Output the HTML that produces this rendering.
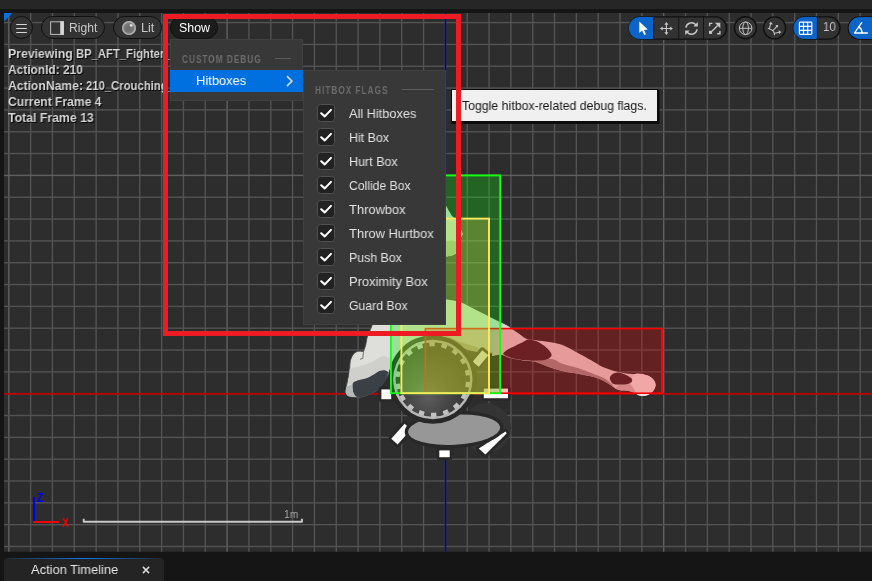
<!DOCTYPE html>
<html><head><meta charset="utf-8">
<style>
html,body{margin:0;padding:0;}
body{width:872px;height:581px;overflow:hidden;background:#151515;font-family:"Liberation Sans",sans-serif;position:relative;}
.abs{position:absolute;}
span{will-change:transform;}
#topbar{left:0;top:0;width:872px;height:9px;background:#262626;}
#vp{left:0;top:0;width:872px;height:581px;}
.pill{position:absolute;box-sizing:border-box;height:23.4px;top:16.1px;border:1.4px solid #101010;border-radius:12px;background:#333333;}
.info{color:#d6d6d6;text-shadow:1px 1px 0 #000;}
.menu{position:absolute;background:#383838;box-sizing:border-box;border:1px solid #404040;}
.cb{position:absolute;width:17.6px;height:17.6px;box-sizing:border-box;border:1px solid #505050;border-radius:3.5px;background:#222222;}
#tip{left:450.5px;top:89.3px;width:207px;height:33.2px;box-sizing:border-box;background:#f0f0f0;border:1px solid #0c0c0c;box-shadow:1px 1.5px 0 0.5px #0c0c0c;}
#tab{left:4px;top:558px;width:160px;height:23px;background:#242424;border-radius:4px 4px 0 0;overflow:hidden;}
</style></head><body>
<div class="abs" id="topbar"></div>
<svg class="abs" id="vp" width="872" height="581" viewBox="0 0 872 581">
<rect x="4" y="13" width="868" height="538.7" fill="#2d2d2d"/>
<rect x="8.10" y="13" width="1.4" height="538.7" fill="#606060"/>
<rect x="29.93" y="13" width="1.4" height="538.7" fill="#535353"/>
<rect x="51.76" y="13" width="1.4" height="538.7" fill="#535353"/>
<rect x="73.59" y="13" width="1.4" height="538.7" fill="#535353"/>
<rect x="95.42" y="13" width="1.4" height="538.7" fill="#535353"/>
<rect x="117.25" y="13" width="1.4" height="538.7" fill="#535353"/>
<rect x="139.08" y="13" width="1.4" height="538.7" fill="#535353"/>
<rect x="160.91" y="13" width="1.4" height="538.7" fill="#535353"/>
<rect x="182.74" y="13" width="1.4" height="538.7" fill="#535353"/>
<rect x="204.57" y="13" width="1.4" height="538.7" fill="#535353"/>
<rect x="226.40" y="13" width="1.4" height="538.7" fill="#606060"/>
<rect x="248.23" y="13" width="1.4" height="538.7" fill="#535353"/>
<rect x="270.06" y="13" width="1.4" height="538.7" fill="#535353"/>
<rect x="291.89" y="13" width="1.4" height="538.7" fill="#535353"/>
<rect x="313.72" y="13" width="1.4" height="538.7" fill="#535353"/>
<rect x="335.55" y="13" width="1.4" height="538.7" fill="#535353"/>
<rect x="357.38" y="13" width="1.4" height="538.7" fill="#535353"/>
<rect x="379.21" y="13" width="1.4" height="538.7" fill="#535353"/>
<rect x="401.04" y="13" width="1.4" height="538.7" fill="#535353"/>
<rect x="422.87" y="13" width="1.4" height="538.7" fill="#535353"/>
<rect x="444.70" y="13" width="1.4" height="538.7" fill="#606060"/>
<rect x="466.53" y="13" width="1.4" height="538.7" fill="#535353"/>
<rect x="488.36" y="13" width="1.4" height="538.7" fill="#535353"/>
<rect x="510.19" y="13" width="1.4" height="538.7" fill="#535353"/>
<rect x="532.02" y="13" width="1.4" height="538.7" fill="#535353"/>
<rect x="553.85" y="13" width="1.4" height="538.7" fill="#535353"/>
<rect x="575.68" y="13" width="1.4" height="538.7" fill="#535353"/>
<rect x="597.51" y="13" width="1.4" height="538.7" fill="#535353"/>
<rect x="619.34" y="13" width="1.4" height="538.7" fill="#535353"/>
<rect x="641.17" y="13" width="1.4" height="538.7" fill="#535353"/>
<rect x="663.00" y="13" width="1.4" height="538.7" fill="#606060"/>
<rect x="684.83" y="13" width="1.4" height="538.7" fill="#535353"/>
<rect x="706.66" y="13" width="1.4" height="538.7" fill="#535353"/>
<rect x="728.49" y="13" width="1.4" height="538.7" fill="#535353"/>
<rect x="750.32" y="13" width="1.4" height="538.7" fill="#535353"/>
<rect x="772.15" y="13" width="1.4" height="538.7" fill="#535353"/>
<rect x="793.98" y="13" width="1.4" height="538.7" fill="#535353"/>
<rect x="815.81" y="13" width="1.4" height="538.7" fill="#535353"/>
<rect x="837.64" y="13" width="1.4" height="538.7" fill="#535353"/>
<rect x="859.47" y="13" width="1.4" height="538.7" fill="#535353"/>
<rect x="4" y="21.89" width="868" height="1.4" fill="#535353"/>
<rect x="4" y="43.72" width="868" height="1.4" fill="#535353"/>
<rect x="4" y="65.55" width="868" height="1.4" fill="#535353"/>
<rect x="4" y="87.38" width="868" height="1.4" fill="#535353"/>
<rect x="4" y="109.21" width="868" height="1.4" fill="#535353"/>
<rect x="4" y="131.04" width="868" height="1.4" fill="#535353"/>
<rect x="4" y="152.87" width="868" height="1.4" fill="#535353"/>
<rect x="4" y="174.70" width="868" height="1.4" fill="#606060"/>
<rect x="4" y="196.53" width="868" height="1.4" fill="#535353"/>
<rect x="4" y="218.36" width="868" height="1.4" fill="#535353"/>
<rect x="4" y="240.19" width="868" height="1.4" fill="#535353"/>
<rect x="4" y="262.02" width="868" height="1.4" fill="#535353"/>
<rect x="4" y="283.85" width="868" height="1.4" fill="#535353"/>
<rect x="4" y="305.68" width="868" height="1.4" fill="#535353"/>
<rect x="4" y="327.51" width="868" height="1.4" fill="#535353"/>
<rect x="4" y="349.34" width="868" height="1.4" fill="#535353"/>
<rect x="4" y="371.17" width="868" height="1.4" fill="#535353"/>
<rect x="4" y="393.00" width="868" height="1.4" fill="#606060"/>
<rect x="4" y="414.83" width="868" height="1.4" fill="#535353"/>
<rect x="4" y="436.66" width="868" height="1.4" fill="#535353"/>
<rect x="4" y="458.49" width="868" height="1.4" fill="#535353"/>
<rect x="4" y="480.32" width="868" height="1.4" fill="#535353"/>
<rect x="4" y="502.15" width="868" height="1.4" fill="#535353"/>
<rect x="4" y="523.98" width="868" height="1.4" fill="#535353"/>
<rect x="4" y="545.81" width="868" height="1.4" fill="#535353"/>
<defs>
<radialGradient id="sph" cx="0.44" cy="0.72" r="0.6"><stop offset="0" stop-color="#5e5e5e"/><stop offset="0.45" stop-color="#464646"/><stop offset="1" stop-color="#2e2e2e"/></radialGradient>
<clipPath id="vpclip"><rect x="4" y="13" width="868" height="538.7"/></clipPath>
</defs>
<g clip-path="url(#vpclip)">
<rect x="4" y="392.9" width="868" height="1.8" fill="#b80000"/>
<rect x="444.7" y="13" width="1.5" height="539" fill="#0000b0"/>
<path d="M446.0 206.0 C446.0 206.0 450.3 213.7 452.0 216.0 C453.7 218.3 454.7 218.0 456.0 220.0 C457.3 222.0 458.9 225.7 460.0 228.0 C461.1 230.3 462.8 234.0 462.8 234.0 C462.8 234.0 460.7 237.3 460.0 240.0 C459.3 242.7 459.7 247.5 458.5 250.0 C457.3 252.5 456.1 253.8 453.0 255.0 C449.9 256.2 440.0 257.0 440.0 257.0 C440.0 257.0 440.0 298.0 440.0 298.0 C440.0 298.0 442.5 298.8 446.0 299.5 C449.5 300.2 456.3 300.8 461.0 302.4 C465.7 304.0 469.9 307.0 474.4 309.3 C478.9 311.6 484.1 314.1 488.2 316.2 C492.3 318.3 495.8 320.0 499.2 321.7 C502.6 323.4 505.7 324.3 508.8 326.5 C511.9 328.7 518.0 335.0 518.0 335.0 C518.0 335.0 501.3 354.7 501.3 354.7 C501.3 354.7 495.7 353.4 491.0 352.7 C486.3 352.0 478.2 351.6 473.0 350.6 C467.8 349.7 463.8 347.1 460.0 347.0 C456.2 346.9 453.3 344.5 450.0 350.0 C446.7 355.5 440.0 380.0 440.0 380.0 C440.0 380.0 410.0 380.0 410.0 380.0 C410.0 380.0 403.1 359.2 400.7 356.4 C398.3 353.6 397.7 361.0 395.9 363.3 C394.1 365.6 391.3 368.4 390.0 370.2 C388.7 372.0 389.4 372.3 388.3 374.4 C387.2 376.5 385.2 380.1 383.5 382.6 C381.8 385.1 380.3 387.6 378.0 389.5 C375.7 391.4 372.5 393.0 369.7 394.3 C366.9 395.6 364.1 396.6 361.4 397.1 C358.6 397.6 355.5 397.3 353.2 397.1 C350.9 396.9 348.9 396.5 347.6 395.7 C346.3 394.9 345.6 392.3 345.6 392.3 C345.6 392.3 345.9 389.3 346.3 386.8 C346.8 384.3 347.7 380.1 348.3 377.1 C348.9 374.1 349.4 371.6 349.7 368.9 C350.0 366.1 349.7 363.1 350.4 360.6 C351.1 358.1 352.4 355.3 353.8 353.7 C355.2 352.1 357.1 351.5 358.7 351.2 C360.3 350.9 363.5 351.6 363.5 351.6 C363.5 351.6 364.9 348.0 365.6 345.4 C366.3 342.8 366.6 339.0 367.6 335.8 C368.6 332.6 369.7 332.1 371.8 326.1 C373.9 320.1 375.3 314.4 380.0 300.0 C384.7 285.6 393.3 255.0 400.0 240.0 C406.7 225.0 412.3 215.7 420.0 210.0 C427.7 204.3 446.0 206.0 446.0 206.0Z" fill="#dededa" stroke="#4a4c4e" stroke-width="0.9"/>
<clipPath id="gbox"><rect x="390.9" y="175.4" width="109.3" height="217.8"/></clipPath>
<path d="M446.0 206.0 C446.0 206.0 450.3 213.7 452.0 216.0 C453.7 218.3 454.7 218.0 456.0 220.0 C457.3 222.0 458.9 225.7 460.0 228.0 C461.1 230.3 462.8 234.0 462.8 234.0 C462.8 234.0 460.7 237.3 460.0 240.0 C459.3 242.7 459.7 247.5 458.5 250.0 C457.3 252.5 456.1 253.8 453.0 255.0 C449.9 256.2 440.0 257.0 440.0 257.0 C440.0 257.0 440.0 298.0 440.0 298.0 C440.0 298.0 442.5 298.8 446.0 299.5 C449.5 300.2 456.3 300.8 461.0 302.4 C465.7 304.0 469.9 307.0 474.4 309.3 C478.9 311.6 484.1 314.1 488.2 316.2 C492.3 318.3 495.8 320.0 499.2 321.7 C502.6 323.4 505.7 324.3 508.8 326.5 C511.9 328.7 518.0 335.0 518.0 335.0 C518.0 335.0 501.3 354.7 501.3 354.7 C501.3 354.7 495.7 353.4 491.0 352.7 C486.3 352.0 478.2 351.6 473.0 350.6 C467.8 349.7 463.8 347.1 460.0 347.0 C456.2 346.9 453.3 344.5 450.0 350.0 C446.7 355.5 440.0 380.0 440.0 380.0 C440.0 380.0 410.0 380.0 410.0 380.0 C410.0 380.0 403.1 359.2 400.7 356.4 C398.3 353.6 397.7 361.0 395.9 363.3 C394.1 365.6 391.3 368.4 390.0 370.2 C388.7 372.0 389.4 372.3 388.3 374.4 C387.2 376.5 385.2 380.1 383.5 382.6 C381.8 385.1 380.3 387.6 378.0 389.5 C375.7 391.4 372.5 393.0 369.7 394.3 C366.9 395.6 364.1 396.6 361.4 397.1 C358.6 397.6 355.5 397.3 353.2 397.1 C350.9 396.9 348.9 396.5 347.6 395.7 C346.3 394.9 345.6 392.3 345.6 392.3 C345.6 392.3 345.9 389.3 346.3 386.8 C346.8 384.3 347.7 380.1 348.3 377.1 C348.9 374.1 349.4 371.6 349.7 368.9 C350.0 366.1 349.7 363.1 350.4 360.6 C351.1 358.1 352.4 355.3 353.8 353.7 C355.2 352.1 357.1 351.5 358.7 351.2 C360.3 350.9 363.5 351.6 363.5 351.6 C363.5 351.6 364.9 348.0 365.6 345.4 C366.3 342.8 366.6 339.0 367.6 335.8 C368.6 332.6 369.7 332.1 371.8 326.1 C373.9 320.1 375.3 314.4 380.0 300.0 C384.7 285.6 393.3 255.0 400.0 240.0 C406.7 225.0 412.3 215.7 420.0 210.0 C427.7 204.3 446.0 206.0 446.0 206.0Z" fill="#cbd7cb" clip-path="url(#gbox)"/>
<path d="M440 242 L452 240.5 Q458 241 458.5 246 Q458 252 452 255.5 L440 257.5 Z" fill="#a3b596"/>
<path d="M445.5 336.1 C448.0 335.7 455.9 340.6 460.7 342.3 C465.5 344.0 471.0 345.4 474.4 346.5 C477.8 347.6 478.5 348.3 481.3 349.2 C484.1 350.1 487.7 351.1 491.0 352.0 C494.3 352.9 501.3 354.7 501.3 354.7 C501.3 354.7 495.7 354.2 491.0 353.6 C486.3 353.0 478.2 352.2 473.0 351.2 C467.8 350.2 464.6 348.5 460.0 347.5 C455.4 346.5 445.5 345.0 445.5 345.0 C445.5 345.0 443.0 336.6 445.5 336.1Z" fill="#a9ad96" />
<path d="M349.7 368.9 C349.7 368.9 356.3 367.1 360.0 366.0 C363.7 364.9 368.0 363.7 372.0 362.0 C376.0 360.3 380.0 355.8 384.0 356.0 C388.0 356.2 395.9 363.3 395.9 363.3 C395.9 363.3 391.8 369.1 390.0 370.2 C388.2 371.3 386.7 370.1 384.9 370.2 C383.1 370.3 381.1 370.2 379.3 370.9 C377.5 371.6 376.1 373.1 373.8 374.4 C371.5 375.7 368.4 377.5 365.6 378.5 C362.9 379.5 359.5 379.7 357.3 380.6 C355.1 381.5 354.0 383.4 352.5 384.0 C351.0 384.6 348.3 384.0 348.3 384.0 C348.3 384.0 349.7 368.9 349.7 368.9Z" fill="#cfcfcb" />
<path d="M363.5 351.6 L362.8 358.5 L360 359.2" fill="none" stroke="#55585a" stroke-width="0.8"/>
<path d="M352.5 384.0 C353.2 382.1 355.1 381.5 357.3 380.6 C359.5 379.7 362.9 379.5 365.6 378.5 C368.4 377.5 371.5 375.7 373.8 374.4 C376.1 373.1 377.5 371.6 379.3 370.9 C381.1 370.2 383.4 370.0 384.9 370.2 C386.4 370.4 388.3 372.3 388.3 372.3 C388.3 372.3 387.0 377.3 385.5 379.9 C384.0 382.5 381.7 385.8 379.3 388.1 C376.9 390.4 373.9 392.3 371.1 393.7 C368.4 395.1 365.3 396.2 362.8 396.7 C360.3 397.1 357.5 397.1 355.9 396.4 C354.3 395.7 353.8 394.4 353.2 392.3 C352.6 390.2 351.8 385.9 352.5 384.0Z" fill="#3a4046" />
<path d="M346.3 386.8 C346.3 386.8 352.5 384.0 352.5 384.0 C352.5 384.0 352.6 390.2 353.2 392.3 C353.8 394.4 355.9 396.4 355.9 396.4 C355.9 396.4 354.6 397.2 353.2 397.1 C351.8 397.0 348.9 396.5 347.6 395.7 C346.3 394.9 345.6 392.3 345.6 392.3 C345.6 392.3 346.3 386.8 346.3 386.8Z" fill="#b4b8b8" />
<path d="M499 321.5 L508.8 326.7 L516 333 L500.6 328.2 Z" fill="#d4d4d4"/>
<path d="M497.0 326.0 C497.0 326.0 501.0 322.5 501.0 322.5 C501.0 322.5 507.7 326.3 510.7 328.2 C513.7 330.1 516.4 331.9 519.1 333.7 C521.8 335.5 524.1 338.0 526.9 339.1 C529.7 340.2 532.3 339.8 536.0 340.3 C539.7 340.8 544.8 341.3 549.2 342.1 C553.6 342.9 558.5 343.7 562.5 345.1 C566.5 346.5 569.3 348.4 573.3 350.5 C577.3 352.6 583.0 355.8 586.6 357.8 C590.2 359.8 592.5 361.1 595.0 362.6 C597.5 364.1 598.8 365.3 601.7 366.6 C604.6 367.9 608.9 369.3 612.5 370.4 C616.1 371.5 619.8 372.5 623.4 373.1 C627.0 373.7 631.0 374.0 634.2 374.2 C637.5 374.4 640.2 373.8 642.9 374.2 C645.6 374.6 648.5 375.6 650.5 376.9 C652.5 378.1 654.0 380.1 654.8 381.7 C655.6 383.3 655.8 385.0 655.4 386.6 C655.0 388.2 654.1 390.1 652.7 391.5 C651.3 392.9 649.2 394.6 647.2 395.3 C645.2 396.0 642.5 396.1 640.7 395.8 C638.9 395.5 638.4 394.5 636.4 393.7 C634.4 392.9 631.3 391.6 628.8 391.0 C626.3 390.4 623.4 390.8 621.2 390.4 C619.0 390.0 618.0 390.0 615.8 388.8 C613.6 387.6 610.9 385.0 608.2 383.4 C605.5 381.8 602.4 380.2 599.5 379.0 C596.6 377.8 594.2 377.1 590.8 376.3 C587.4 375.5 584.0 374.9 579.3 374.0 C574.6 373.1 567.9 372.3 562.5 371.0 C557.1 369.7 551.4 367.8 546.8 366.2 C542.2 364.6 538.8 362.6 534.8 361.6 C530.8 360.6 526.9 361.0 522.7 360.4 C518.5 359.8 513.1 358.8 509.5 357.8 C505.9 356.9 503.9 355.0 501.0 354.7 C498.1 354.4 492.0 356.0 492.0 356.0 C492.0 356.0 497.0 326.0 497.0 326.0Z" fill="#dfd0d0" />
<path d="M634.2 374.2 C636.0 373.0 640.2 373.8 642.9 374.2 C645.6 374.6 648.5 375.6 650.5 376.9 C652.5 378.1 654.0 380.1 654.8 381.7 C655.6 383.3 655.8 385.0 655.4 386.6 C655.0 388.2 654.1 390.1 652.7 391.5 C651.3 392.9 649.2 394.6 647.2 395.3 C645.2 396.0 642.5 396.1 640.7 395.8 C638.9 395.5 637.9 395.3 636.4 393.7 C634.9 392.1 632.7 388.1 632.0 386.0 C631.3 383.9 631.6 383.2 632.0 381.2 C632.4 379.2 632.4 375.4 634.2 374.2Z" fill="#ece2e0" />
<path d="M534.8 361.6 C534.8 361.6 547.0 358.6 551.6 359.0 C556.2 359.4 557.9 362.2 562.5 363.8 C567.1 365.4 573.9 366.8 579.3 368.6 C584.7 370.4 590.4 372.7 595.0 374.6 C599.6 376.5 603.5 377.6 607.0 380.0 C610.5 382.4 615.8 388.8 615.8 388.8 C615.8 388.8 610.9 385.0 608.2 383.4 C605.5 381.8 602.4 380.2 599.5 379.0 C596.6 377.8 594.2 377.1 590.8 376.3 C587.4 375.5 584.0 374.9 579.3 374.0 C574.6 373.1 567.9 372.3 562.5 371.0 C557.1 369.7 551.4 367.8 546.8 366.2 C542.2 364.6 534.8 361.6 534.8 361.6Z" fill="#9a8c8c" />
<path d="M615.8 388.8 C615.8 388.8 617.0 385.3 619.0 384.5 C621.0 383.7 625.5 383.6 627.7 383.9 C629.9 384.1 630.5 384.4 632.0 386.0 C633.5 387.6 636.4 393.7 636.4 393.7 C636.4 393.7 631.3 391.6 628.8 391.0 C626.3 390.4 623.4 390.8 621.2 390.4 C619.0 390.0 615.8 388.8 615.8 388.8Z" fill="#c8b6b4" />
<path d="M503.2 354.1 C502.8 352.9 504.9 351.3 507.0 349.9 C509.1 348.5 512.7 347.1 515.5 345.7 C518.3 344.3 521.8 342.6 523.9 341.5 C526.0 340.4 526.1 339.5 528.1 339.4 C530.1 339.3 533.5 339.9 536.0 340.9 C538.5 341.8 541.0 343.5 543.2 345.1 C545.4 346.7 547.8 348.8 549.2 350.5 C550.6 352.2 551.8 353.9 551.6 355.3 C551.4 356.7 549.8 358.1 548.0 359.0 C546.2 359.9 543.6 360.1 540.8 360.4 C538.0 360.7 534.7 360.9 531.1 360.8 C527.5 360.7 522.7 360.2 519.1 359.6 C515.5 359.0 512.1 358.1 509.5 357.2 C506.9 356.3 503.6 355.3 503.2 354.1Z" fill="#3a2c30" />
<path d="M609.8 378.0 C609.8 376.5 611.1 375.1 612.5 374.2 C613.9 373.3 615.8 372.4 618.0 372.5 C620.2 372.6 623.3 373.8 625.5 374.7 C627.7 375.6 629.9 376.9 631.0 378.0 C632.1 379.1 632.5 380.2 632.0 381.2 C631.5 382.2 629.9 383.3 627.7 383.9 C625.5 384.4 621.5 384.6 619.0 384.5 C616.5 384.4 614.0 384.5 612.5 383.4 C611.0 382.3 609.8 379.5 609.8 378.0Z" fill="#3a2c30" />
<g>
 <circle cx="486" cy="428" r="25" fill="#343434"/>
 <g fill="#ffffff" stroke="#282828" stroke-width="5.6" stroke-linejoin="round" paint-order="stroke">
  <rect x="381.4" y="389.4" width="9.8" height="9.8"/>
  <rect x="483.8" y="388.6" width="24.2" height="9.6"/>
  <rect x="-7.5" y="-4" width="15" height="8" transform="translate(480.5 358.5) rotate(-50)"/>
  <rect x="-9.5" y="-4.3" width="20" height="8.6" transform="translate(400.8 434.5) rotate(-48)"/>
  <rect x="439.3" y="450.4" width="10.4" height="6.8"/>
  <path d="M478.7 448.6 L505.6 431.6 L506.6 433.6 L485.4 454.4 Z"/>
 </g>
 <ellipse cx="454.1" cy="429.7" rx="46.2" ry="15.1" fill="#979797" stroke="#282828" stroke-width="6.6" paint-order="stroke" transform="rotate(-3 454.1 429.7)"/>
 <circle cx="432.8" cy="379.5" r="44.3" fill="#282828"/>
 <circle cx="432.8" cy="379.5" r="38.2" fill="url(#sph)"/>
 <circle cx="432.8" cy="379.5" r="35.4" fill="none" stroke="#c2c2c2" stroke-width="4.4" stroke-dasharray="5.4 6.957" transform="rotate(4 432.8 379.5)"/>
 <circle cx="432.8" cy="379.5" r="38.45" fill="none" stroke="#b8b8b8" stroke-width="2.5"/>
</g>
<rect x="425.4" y="328.6" width="236.8" height="64.6" fill="rgba(255,0,0,0.26)" stroke="#ff0000" stroke-width="1.6"/>
<rect x="661" y="328" width="2" height="66" fill="#ff0000"/>
<rect x="390.9" y="175.4" width="109.3" height="217.8" fill="rgba(8,255,8,0.26)" stroke="#14ff14" stroke-width="1.9"/>
<rect x="401.4" y="218.6" width="87.6" height="174.6" fill="rgba(255,232,96,0.256)" stroke="#ffe860" stroke-width="1.9"/>
<rect x="33" y="497" width="2.1" height="25.5" fill="#0000f0"/>
<rect x="33" y="521" width="26" height="2" fill="#f00000"/>
<path d="M83.7 518.8 V521.8 H302 V518.8" fill="none" stroke="#c8c8c8" stroke-width="1.9" stroke-linejoin="round"/>
</g>
</svg>
<span style="position:absolute;left:36.9px;top:490.8px;font-size:12.4px;font-weight:bold;white-space:pre;transform-origin:0 0;transform:scaleX(0.8445);color:#0000f0;line-height:14px;">Z</span>
<span style="position:absolute;left:61.9px;top:515.7px;font-size:12.4px;font-weight:bold;white-space:pre;transform-origin:0 0;transform:scaleX(0.8227);color:#f00000;line-height:14px;">X</span>
<span style="position:absolute;left:284px;top:508.2px;font-size:10.6px;font-weight:normal;white-space:pre;transform-origin:0 0;transform:scaleX(0.9648);color:#a8a8a8;line-height:12px;">1m</span>
<!-- toolbar left -->
<svg class="abs" style="left:4px;top:13px" width="9" height="9"><path d="M0 0H8.5L0 8.5Z" fill="#0a6fe0"/></svg>
<div class="pill" style="left:10px;width:23px;"></div>
<div class="pill" style="left:41px;width:64px;"></div>
<div class="pill" style="left:113px;width:48.5px;"></div>
<div class="pill" style="left:170px;width:47.5px;background:#1c1c1c;"></div>
<span style="position:absolute;left:69.4px;top:20.6px;font-size:12px;font-weight:normal;white-space:pre;transform-origin:0 0;transform:scaleX(1.0102);color:#c8c8c8;line-height:14px;">Right</span>
<span style="position:absolute;left:140.8px;top:20.6px;font-size:12px;font-weight:normal;white-space:pre;transform-origin:0 0;transform:scaleX(1.0562);color:#c8c8c8;line-height:14px;">Lit</span>
<span style="position:absolute;left:178.6px;top:20.6px;font-size:12px;font-weight:normal;white-space:pre;transform-origin:0 0;transform:scaleX(1.0323);color:#ffffff;line-height:14px;">Show</span>
<!-- info text -->
<div class="abs info" style="left:0;top:0;width:175px;height:140px;overflow:hidden">
<span style="position:absolute;left:8.0px;top:45.8px;font-size:12.5px;font-weight:bold;white-space:pre;transform-origin:0 0;transform:scaleX(0.9818);line-height:16px;">Previewing</span>
<span style="position:absolute;left:75.9px;top:45.8px;font-size:12.5px;font-weight:bold;white-space:pre;transform-origin:0 0;transform:scaleX(0.9016);line-height:16px;">BP_AFT_Fighter_C</span>
<span style="position:absolute;left:8.4px;top:61.8px;font-size:12.5px;font-weight:bold;white-space:pre;transform-origin:0 0;transform:scaleX(0.9541);line-height:16px;">ActionId: 210</span>
<span style="position:absolute;left:8.2px;top:77.8px;font-size:12.5px;font-weight:bold;white-space:pre;transform-origin:0 0;transform:scaleX(0.9728);line-height:16px;">ActionName:</span>
<span style="position:absolute;left:86.2px;top:77.8px;font-size:12.5px;font-weight:bold;white-space:pre;transform-origin:0 0;transform:scaleX(0.9035);line-height:16px;">210_Crouching_</span>
<span style="position:absolute;left:8.4px;top:93.8px;font-size:12.5px;font-weight:bold;white-space:pre;transform-origin:0 0;transform:scaleX(0.9683);line-height:16px;">Current Frame 4</span>
<span style="position:absolute;left:8.4px;top:109.8px;font-size:12.5px;font-weight:bold;white-space:pre;transform-origin:0 0;transform:scaleX(0.9827);line-height:16px;">Total Frame 13</span>
</div>
<svg class="abs" style="left:0;top:0" width="872" height="48" viewBox="0 0 872 48">
<defs>
<clipPath id="tg1"><rect x="628.5" y="16.5" width="98.5" height="23" rx="11.5"/></clipPath>
<clipPath id="tg2"><rect x="793" y="16.5" width="47.5" height="23" rx="11.5"/></clipPath>
<radialGradient id="litg" cx="0.45" cy="0.55" r="0.55"><stop offset="0" stop-color="#6a6a6a"/><stop offset="0.7" stop-color="#7c7c7c"/><stop offset="1" stop-color="#a8a8a8"/></radialGradient>
</defs>
<!-- hamburger -->
<g stroke="#d6d6d6" stroke-width="1.1">
<path d="M16.2 24.5H26.8M16.2 28.5H26.8M16.2 32.5H26.8"/>
</g>
<!-- Right icon -->
<rect x="50.6" y="21.8" width="12.8" height="12.6" fill="none" stroke="#bdbdbd" stroke-width="1"/>
<rect x="60.2" y="21.3" width="3.7" height="13.6" fill="#d4d4d4"/>
<!-- Lit icon -->
<circle cx="129" cy="28" r="6.9" fill="url(#litg)"/>
<circle cx="129" cy="28" r="6.2" fill="none" stroke="#a9a9a9" stroke-width="1.6"/>
<circle cx="131.2" cy="25.4" r="1.3" fill="#e6e6e6"/>
<!-- transform group -->
<g clip-path="url(#tg1)">
<rect x="628" y="16" width="100" height="24" fill="#333333"/>
<rect x="628" y="16" width="25.2" height="24" fill="#0c63c8"/>
<rect x="653" y="16" width="1.1" height="24" fill="#151515"/>
<rect x="678.2" y="16" width="1" height="24" fill="#151515"/>
<rect x="703" y="16" width="1" height="24" fill="#151515"/>
</g>
<rect x="629" y="16.9" width="97.5" height="22.2" rx="11.1" fill="none" stroke="#101010" stroke-width="1.4"/>
<clipPath id="tg1b"><rect x="628.9" y="16.9" width="97.7" height="22.2" rx="11.1"/></clipPath>
<rect x="628" y="16" width="25" height="24" fill="#0c63c8" clip-path="url(#tg1b)"/>
<!-- cursor -->
<path d="M639.3 21.4 L639.3 33 L642.1 30.6 L644.2 35 L646 34.2 L644 29.9 L647.8 29.6 Z" fill="#ffffff"/>
<!-- move -->
<g stroke="#c6c6c6" stroke-width="1.2" fill="none">
<path d="M666.4 24V33M661.9 28.5H670.9"/>
</g>
<g fill="#c6c6c6">
<path d="M666.4 21.9L668.5 24.7H664.3Z"/><path d="M666.4 35.1L668.5 32.3H664.3Z"/>
<path d="M659.9 28.5L662.7 26.4V30.6Z"/><path d="M672.9 28.5L670.1 26.4V30.6Z"/>
</g>
<!-- rotate -->
<g stroke="#c6c6c6" stroke-width="1.5" fill="none" stroke-linecap="butt">
<path d="M685.9 27.6 A5.7 5.7 0 0 1 695.8 24.8"/>
<path d="M697.1 29.4 A5.7 5.7 0 0 1 687.2 32.2"/>
</g>
<path d="M693.4 26.4 L697.9 26.6 L697.7 22.1 Z" fill="#c6c6c6"/>
<path d="M689.6 30.6 L685.1 30.4 L685.3 34.9 Z" fill="#c6c6c6"/>
<!-- scale -->
<g stroke="#c6c6c6" stroke-width="1.4" fill="none" stroke-linejoin="miter">
<path d="M709.6 26.2V23.4H712.4"/>
<path d="M719.9 30.9V33.7H717.1"/>
<path d="M712 31.2L717.6 25.6"/>
</g>
<rect x="709" y="30.8" width="3.1" height="3.1" fill="#c6c6c6"/>
<path d="M714.9 22.8H720.3V28.2Z" fill="#c6c6c6"/>
<!-- globe circle -->
<circle cx="745.5" cy="27.8" r="11" fill="#333333" stroke="#101010" stroke-width="1.4"/>
<g stroke="#c0c0c0" stroke-width="1" fill="none">
<circle cx="745.6" cy="28.3" r="6.3"/>
<ellipse cx="745.6" cy="28.3" rx="2.8" ry="6.3"/>
<path d="M739.3 28.3H751.9"/>
</g>
<!-- surface snap circle -->
<circle cx="774.6" cy="27.9" r="11" fill="#333333" stroke="#101010" stroke-width="1.4"/>
<g stroke="#c6c6c6" stroke-width="1.1" fill="none" stroke-linecap="round">
<path d="M768.3 28.5 Q772.3 29.4 773.3 31.2 Q774.6 33 774.5 34.8"/>
<path d="M769.4 28.3 L770.7 23.8M773.1 30.5 L776.8 26.4M774.7 33.2 L779.4 32.3"/>
</g>
<g fill="#c6c6c6">
<path d="M769.1 24 L770.9 21.8 L772.9 24.5Z"/>
<path d="M775.3 25.2 L778.2 25 L777.9 27.8Z"/>
<path d="M778.5 30.1 L781.3 32.1 L779.2 33.9Z"/>
</g>
<!-- grid pill -->
<g clip-path="url(#tg2)">
<rect x="792" y="16" width="50" height="24" fill="#333333"/>
<rect x="792" y="16" width="25" height="24" fill="#0c63c8"/>
<rect x="816.7" y="16" width="1" height="24" fill="#151515"/>
</g>
<rect x="793.5" y="16.9" width="46.5" height="22.2" rx="11.1" fill="none" stroke="#101010" stroke-width="1.4"/>
<clipPath id="tg2b"><rect x="793.4" y="16.9" width="46.7" height="22.2" rx="11.1"/></clipPath>
<rect x="792" y="16" width="24.7" height="24" fill="#0c63c8" clip-path="url(#tg2b)"/>
<g stroke="#ffffff" stroke-width="1.2" fill="none">
<rect x="799.4" y="22.2" width="12.4" height="12.2" rx="0.8"/>
<path d="M803.5 22.2V34.4M807.7 22.2V34.4M799.4 26.3H811.8M799.4 30.4H811.8"/>
</g>
<!-- angle pill -->
<rect x="848.3" y="16.9" width="40" height="22.2" rx="11.1" fill="#0c63c8" stroke="#101010" stroke-width="1.4"/>
<rect x="848.7" y="17.3" width="40" height="21.4" rx="10.7" fill="#0c63c8"/>
<g stroke="#ffffff" stroke-width="1.3" fill="none" stroke-linecap="round" stroke-linejoin="round">
<path d="M861.7 22.7 L854.5 33 H867.4"/>
<path d="M858.9 26.9 A7.6 7.6 0 0 1 862.1 33"/>
</g>
</svg>

<span style="position:absolute;left:823.2px;top:20.0px;font-size:13px;font-weight:normal;white-space:pre;transform-origin:0 0;transform:scaleX(0.8847);color:#c4c4c4;line-height:14px;">10</span>
<!-- menus -->
<div class="menu" style="left:170px;top:39px;width:133px;height:61.5px"></div>
<span style="position:absolute;left:182.3px;top:53.5px;font-size:10.6px;font-weight:bold;white-space:pre;transform-origin:0 0;transform:scaleX(0.7766);letter-spacing:1.3px;color:#6c6c6c;line-height:10px;">CUSTOM DEBUG</span>
<div class="abs" style="left:275px;top:57.7px;width:15.6px;height:1px;background:#5c5c5c"></div>
<div class="abs" style="left:170px;top:70px;width:133px;height:22px;background:#0070e0"></div>
<span style="position:absolute;left:196.3px;top:73.4px;font-size:13px;font-weight:normal;white-space:pre;transform-origin:0 0;transform:scaleX(0.9925);color:#ffffff;line-height:16px;">Hitboxes</span>
<svg class="abs" style="left:284px;top:74px" width="12" height="14" viewBox="0 0 12 14"><path d="M3.4 2.6 L8 7.1 L3.4 11.6" fill="none" stroke="#cfd6e0" stroke-width="1.7" stroke-linecap="round" stroke-linejoin="round"/></svg>
<div class="menu" style="left:303px;top:70px;width:143px;height:254.5px"></div>
<span style="position:absolute;left:315.3px;top:84.5px;font-size:10.6px;font-weight:bold;white-space:pre;transform-origin:0 0;transform:scaleX(0.7782);letter-spacing:1.3px;color:#6c6c6c;line-height:10px;">HITBOX FLAGS</span>
<div class="abs" style="left:402px;top:88.9px;width:31.8px;height:1px;background:#5c5c5c"></div>
<div class="cb" style="left:317.2px;top:104.2px"><svg class="abs" style="left:-1px;top:-1px" width="17.6" height="17.6" viewBox="0 0 17.6 17.6"><path d="M4.2 9.3 L7.8 12.4 L14 5.9" fill="none" stroke="#fff" stroke-width="2.1" stroke-linecap="round" stroke-linejoin="round"/></svg></div><span style="position:absolute;left:349.3px;top:104.60000000000001px;font-size:13px;font-weight:normal;white-space:pre;transform-origin:0 0;transform:scaleX(0.9790);color:#e2e2e2;line-height:18px;">All Hitboxes</span>
<div class="cb" style="left:317.2px;top:128.2px"><svg class="abs" style="left:-1px;top:-1px" width="17.6" height="17.6" viewBox="0 0 17.6 17.6"><path d="M4.2 9.3 L7.8 12.4 L14 5.9" fill="none" stroke="#fff" stroke-width="2.1" stroke-linecap="round" stroke-linejoin="round"/></svg></div><span style="position:absolute;left:349.3px;top:128.6px;font-size:13px;font-weight:normal;white-space:pre;transform-origin:0 0;transform:scaleX(0.9521);color:#e2e2e2;line-height:18px;">Hit Box</span>
<div class="cb" style="left:317.2px;top:152.2px"><svg class="abs" style="left:-1px;top:-1px" width="17.6" height="17.6" viewBox="0 0 17.6 17.6"><path d="M4.2 9.3 L7.8 12.4 L14 5.9" fill="none" stroke="#fff" stroke-width="2.1" stroke-linecap="round" stroke-linejoin="round"/></svg></div><span style="position:absolute;left:349.3px;top:152.6px;font-size:13px;font-weight:normal;white-space:pre;transform-origin:0 0;transform:scaleX(0.9629);color:#e2e2e2;line-height:18px;">Hurt Box</span>
<div class="cb" style="left:317.2px;top:176.2px"><svg class="abs" style="left:-1px;top:-1px" width="17.6" height="17.6" viewBox="0 0 17.6 17.6"><path d="M4.2 9.3 L7.8 12.4 L14 5.9" fill="none" stroke="#fff" stroke-width="2.1" stroke-linecap="round" stroke-linejoin="round"/></svg></div><span style="position:absolute;left:349.3px;top:176.6px;font-size:13px;font-weight:normal;white-space:pre;transform-origin:0 0;transform:scaleX(0.9367);color:#e2e2e2;line-height:18px;">Collide Box</span>
<div class="cb" style="left:317.2px;top:200.2px"><svg class="abs" style="left:-1px;top:-1px" width="17.6" height="17.6" viewBox="0 0 17.6 17.6"><path d="M4.2 9.3 L7.8 12.4 L14 5.9" fill="none" stroke="#fff" stroke-width="2.1" stroke-linecap="round" stroke-linejoin="round"/></svg></div><span style="position:absolute;left:349.3px;top:200.6px;font-size:13px;font-weight:normal;white-space:pre;transform-origin:0 0;transform:scaleX(0.9916);color:#e2e2e2;line-height:18px;">Throwbox</span>
<div class="cb" style="left:317.2px;top:224.2px"><svg class="abs" style="left:-1px;top:-1px" width="17.6" height="17.6" viewBox="0 0 17.6 17.6"><path d="M4.2 9.3 L7.8 12.4 L14 5.9" fill="none" stroke="#fff" stroke-width="2.1" stroke-linecap="round" stroke-linejoin="round"/></svg></div><span style="position:absolute;left:349.3px;top:224.6px;font-size:13px;font-weight:normal;white-space:pre;transform-origin:0 0;transform:scaleX(0.9935);color:#e2e2e2;line-height:18px;">Throw Hurtbox</span>
<div class="cb" style="left:317.2px;top:248.2px"><svg class="abs" style="left:-1px;top:-1px" width="17.6" height="17.6" viewBox="0 0 17.6 17.6"><path d="M4.2 9.3 L7.8 12.4 L14 5.9" fill="none" stroke="#fff" stroke-width="2.1" stroke-linecap="round" stroke-linejoin="round"/></svg></div><span style="position:absolute;left:349.3px;top:248.6px;font-size:13px;font-weight:normal;white-space:pre;transform-origin:0 0;transform:scaleX(0.9469);color:#e2e2e2;line-height:18px;">Push Box</span>
<div class="cb" style="left:317.2px;top:272.2px"><svg class="abs" style="left:-1px;top:-1px" width="17.6" height="17.6" viewBox="0 0 17.6 17.6"><path d="M4.2 9.3 L7.8 12.4 L14 5.9" fill="none" stroke="#fff" stroke-width="2.1" stroke-linecap="round" stroke-linejoin="round"/></svg></div><span style="position:absolute;left:349.3px;top:272.59999999999997px;font-size:13px;font-weight:normal;white-space:pre;transform-origin:0 0;transform:scaleX(0.9903);color:#e2e2e2;line-height:18px;">Proximity Box</span>
<div class="cb" style="left:317.2px;top:296.2px"><svg class="abs" style="left:-1px;top:-1px" width="17.6" height="17.6" viewBox="0 0 17.6 17.6"><path d="M4.2 9.3 L7.8 12.4 L14 5.9" fill="none" stroke="#fff" stroke-width="2.1" stroke-linecap="round" stroke-linejoin="round"/></svg></div><span style="position:absolute;left:349.3px;top:296.59999999999997px;font-size:13px;font-weight:normal;white-space:pre;transform-origin:0 0;transform:scaleX(0.9412);color:#e2e2e2;line-height:18px;">Guard Box</span>

<div class="abs" id="tip"></div>
<span style="position:absolute;left:461.7px;top:98px;font-size:12.6px;font-weight:normal;white-space:pre;transform-origin:0 0;transform:scaleX(0.9775);color:#161616;line-height:16px;">Toggle hitbox-related debug flags.</span>
<!-- red annotation -->
<div class="abs" style="left:163px;top:14px;width:298px;height:322px;box-sizing:border-box;border:5px solid #ed1c24;"></div>
<!-- bottom tab -->
<div class="abs" id="tab"><div class="abs" style="left:0;top:0;width:160px;height:1.3px;background:linear-gradient(90deg,rgba(10,110,230,0.05),#0b74f0 50%,rgba(10,110,230,0.05))"></div></div>
<span style="position:absolute;left:31.4px;top:561.8px;font-size:13px;font-weight:normal;white-space:pre;transform-origin:0 0;transform:scaleX(0.9892);color:#e4e4e4;line-height:16px;">Action Timeline</span>
<svg class="abs" style="left:141px;top:564.6px" width="10" height="10" viewBox="0 0 10 10"><path d="M1.9 1.9L8.1 8.1M8.1 1.9L1.9 8.1" stroke="#d8d8d8" stroke-width="1.5" fill="none"/></svg>
</body></html>
